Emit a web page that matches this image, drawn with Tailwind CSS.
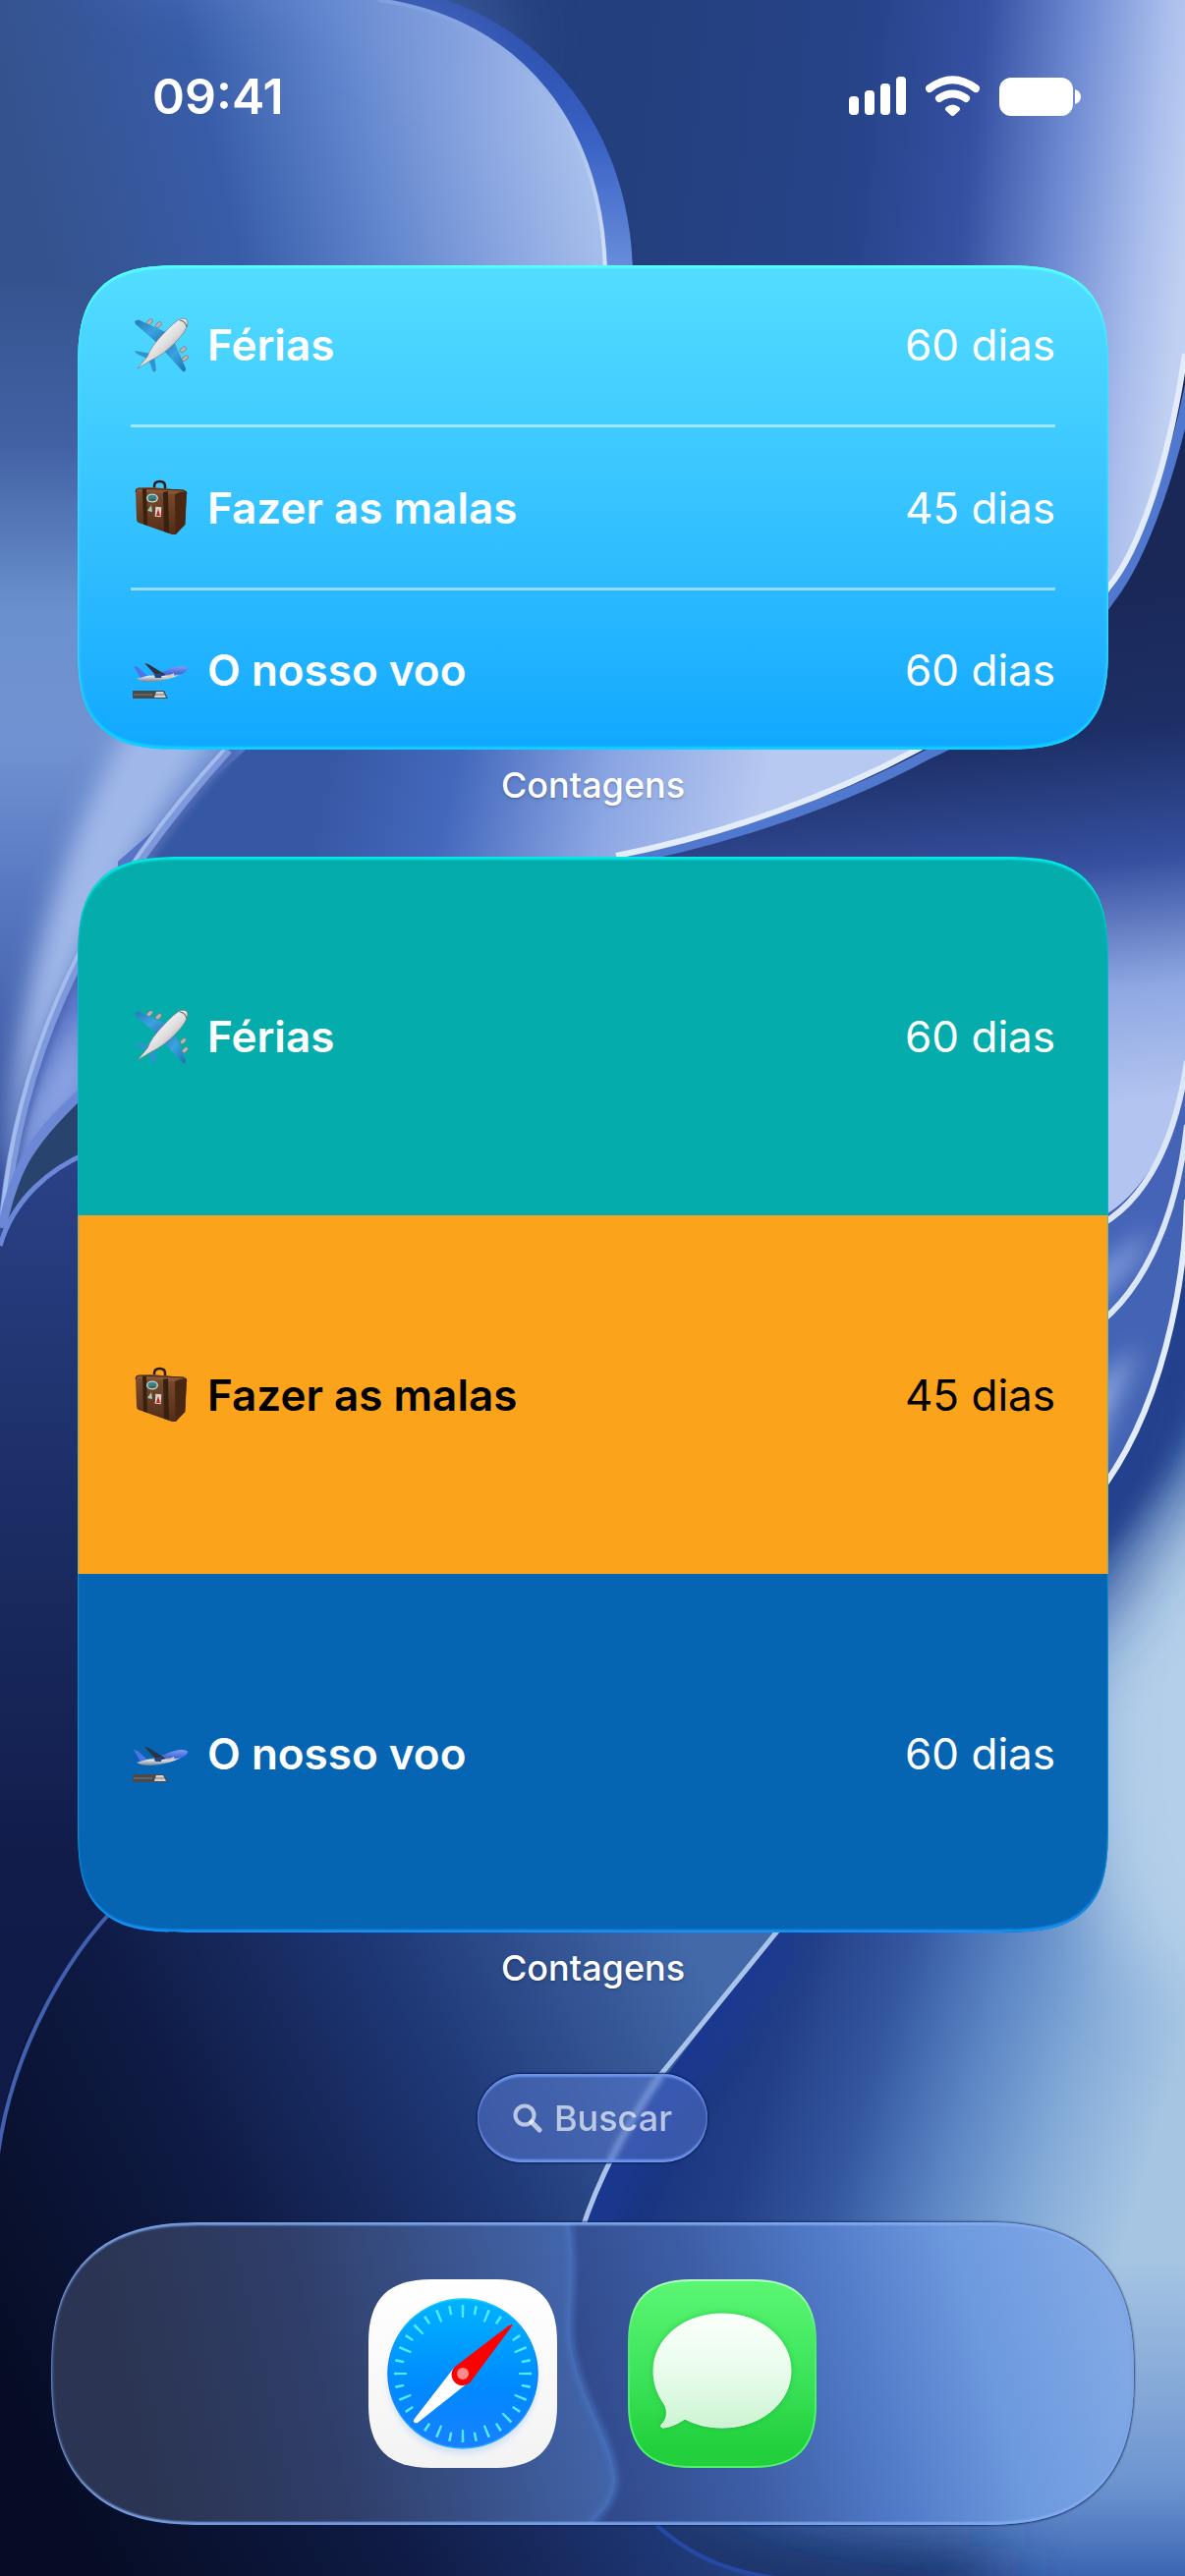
<!DOCTYPE html>
<html lang="pt-BR">
<head>
    <meta charset="UTF-8">
    <meta name="viewport" content="width=device-width, initial-scale=1.0">
    <title>Contagens</title>
    <script src="https://cdn.jsdelivr.net/npm/@tailwindcss/browser@4"></script>
</head>
<body class="relative min-h-screen overflow-x-hidden bg-[#142452] font-[Inter,'Liberation_Sans',sans-serif] text-white">

    <!-- Wallpaper -->
    <svg class="absolute inset-0 -z-10 h-full w-full" viewBox="0 0 1206 2622" preserveAspectRatio="none" aria-hidden="true">
        <defs>
            <filter id="b3" x="-20%" y="-20%" width="140%" height="140%"><feGaussianBlur stdDeviation="3"/></filter>
            <filter id="b12" x="-40%" y="-40%" width="180%" height="180%"><feGaussianBlur stdDeviation="12"/></filter>
            <filter id="b40" x="-60%" y="-60%" width="220%" height="220%"><feGaussianBlur stdDeviation="40"/></filter>
            <linearGradient id="bubble" gradientUnits="userSpaceOnUse" x1="60" y1="330" x2="600" y2="200">
                <stop offset="0" stop-color="#34528d"/><stop offset=".35" stop-color="#385ca8"/><stop offset=".6" stop-color="#5f84cc"/><stop offset=".85" stop-color="#8ea9e2"/><stop offset="1" stop-color="#a6beeb"/>
            </linearGradient>
            <linearGradient id="glint" x1="0" y1="0" x2="0" y2="1">
                <stop offset="0" stop-color="#7f9fdf"/><stop offset="1" stop-color="#dbe8fb"/>
            </linearGradient>
            <linearGradient id="rim" x1="0" y1="0" x2="0" y2="1">
                <stop offset="0" stop-color="#2648a6"/><stop offset=".5" stop-color="#3a62c4"/><stop offset="1" stop-color="#6e93e0"/>
            </linearGradient>
            <linearGradient id="petal" gradientUnits="userSpaceOnUse" x1="640" y1="200" x2="1206" y2="260">
                <stop offset="0" stop-color="#233f7d"/><stop offset=".4" stop-color="#27448a"/><stop offset=".6" stop-color="#3650a2"/><stop offset=".77" stop-color="#6f8bd2"/><stop offset=".92" stop-color="#a9bdec"/><stop offset="1" stop-color="#c0d0f2"/>
            </linearGradient>
            <linearGradient id="tail" gradientUnits="userSpaceOnUse" x1="330" y1="780" x2="760" y2="880">
                <stop offset="0" stop-color="#3657a3"/><stop offset=".3" stop-color="#4468bd"/><stop offset=".65" stop-color="#8ba6e3"/><stop offset="1" stop-color="#b7c8f1"/>
            </linearGradient>
            <linearGradient id="left" gradientUnits="userSpaceOnUse" x1="0" y1="270" x2="0" y2="1200">
                <stop offset="0" stop-color="#34528d"/><stop offset=".2" stop-color="#4262a5"/><stop offset=".38" stop-color="#6a91cd"/><stop offset=".52" stop-color="#7192d2"/><stop offset=".7" stop-color="#5677c0"/><stop offset="1" stop-color="#324c98"/>
            </linearGradient>
            <linearGradient id="navy" gradientUnits="userSpaceOnUse" x1="1100" y1="600" x2="1160" y2="1180">
                <stop offset="0" stop-color="#1a2858"/><stop offset=".25" stop-color="#1d2f66"/><stop offset=".48" stop-color="#3650a0"/><stop offset=".7" stop-color="#8fa8e3"/><stop offset=".9" stop-color="#b2c4ef"/>
            </linearGradient>
            <linearGradient id="side" gradientUnits="userSpaceOnUse" x1="0" y1="1180" x2="0" y2="2200">
                <stop offset="0" stop-color="#2b4187"/><stop offset=".3" stop-color="#1d3069"/><stop offset=".7" stop-color="#111c4a"/><stop offset="1" stop-color="#101a45"/>
            </linearGradient>
            <linearGradient id="bowl" gradientUnits="userSpaceOnUse" x1="0" y1="2420" x2="740" y2="2060">
                <stop offset="0" stop-color="#060c24"/><stop offset=".35" stop-color="#0f1b45"/><stop offset=".65" stop-color="#1e3775"/><stop offset="1" stop-color="#4369a9"/>
            </linearGradient>
            <linearGradient id="wave" gradientUnits="userSpaceOnUse" x1="680" y1="2111" x2="1154" y2="2253">
                <stop offset="0" stop-color="#18347f"/><stop offset=".2" stop-color="#223f86"/><stop offset=".4" stop-color="#34579f"/><stop offset=".6" stop-color="#5b85c4"/><stop offset=".8" stop-color="#84abd8"/><stop offset="1" stop-color="#a6c5e3"/>
            </linearGradient>
            <linearGradient id="wavefade" gradientUnits="userSpaceOnUse" x1="0" y1="2300" x2="0" y2="2622">
                <stop offset="0" stop-color="#5480c8" stop-opacity="0"/><stop offset=".7" stop-color="#5480c8" stop-opacity=".7"/><stop offset="1" stop-color="#3a64b2"/>
            </linearGradient>
            <clipPath id="waveclip"><path d="M1206 1180V2622H780C700 2610 650 2560 610 2490C570 2400 570 2300 606 2235C640 2150 720 2060 789 1967L1110 1530C1185 1440 1206 1300 1206 1221Z"/></clipPath>
        </defs>

        <rect width="1206" height="2622" fill="url(#left)"/>

        <!-- right petal and the dark fold under it -->
        <path d="M400 0H1206V900H560Z" fill="url(#petal)"/>
        <path d="M180 763H960L820 900H80Z" fill="url(#tail)"/>
        <path d="M1206 360C1190 470 1160 560 1128 603C1070 690 990 740 935 763C850 810 740 850 627 872V1400H1206Z" fill="url(#navy)"/>
        <path d="M1217 360C1197 475 1162 568 1131 608C1073 692 997 745 942 769C857 815 740 856 630 876" fill="none" stroke="#5178cf" stroke-width="10"/>
        <path d="M1206 360C1190 470 1160 560 1128 598C1070 686 990 736 935 762C850 808 740 849 627 871" fill="none" stroke="#e3ecfa" stroke-width="6"/>

        <!-- top bubble -->
        <path d="M0 0H454C570 40 646 150 644 290H0Z" fill="url(#rim)"/>
        <path d="M0 0H385C530 20 618 130 617 290H0Z" fill="url(#bubble)"/>
        <path d="M120 -60C300 -50 420 -30 500 60" fill="none" stroke="#6f8fd8" stroke-width="60" opacity=".5" filter="url(#b40)"/>
        <path d="M385 0C530 20 618 130 616 290" fill="none" stroke="url(#glint)" stroke-width="4"/>

        <!-- left petals -->
        <path d="M0 600H160V763H225L130 877L40 1050L0 1180Z" fill="url(#left)"/>
        <path d="M225 740C130 870 50 1010 8 1200C10 1050 50 880 130 740Z" fill="#a0b8e9" filter="url(#b12)"/>
        <path d="M225 763C110 890 20 1040 2 1240L120 1080V877L250 763Z" fill="#5974c6"/>
        <path d="M90 1020C50 1080 25 1130 10 1200L90 1110Z" fill="#8aa3e2" filter="url(#b12)"/>
        <path d="M240 763C148 860 34 1010 7 1230" fill="none" stroke="#5069b4" stroke-width="10" filter="url(#b3)"/>
        <path d="M232 763C126 880 24 1030 4 1240" fill="none" stroke="#7d99dc" stroke-width="10"/>
        <path d="M228 763C121 880 21 1030 2 1240" fill="none" stroke="#a4bcec" stroke-width="4"/>
        <path d="M90 1112C40 1160 16 1190 0 1262V1300L90 1190Z" fill="#29436f"/>
        <path d="M90 1106C40 1150 16 1180 2 1250" fill="none" stroke="#6c87d6" stroke-width="9"/>

        <!-- dark side under the left petals -->
        <path d="M0 1268C14 1220 50 1190 90 1173V1850H300V2200H0Z" fill="url(#side)"/>
        <path d="M0 1268C14 1220 50 1190 90 1173" fill="none" stroke="#6a87d8" stroke-width="5"/>
        <path d="M-30 1320V2100" stroke="#0c1434" stroke-width="60" opacity=".6" filter="url(#b12)"/>

        <!-- right wave -->
        <g>
            <rect x="1100" y="1240" width="106" height="400" fill="#6f8fd4"/>
            <path d="M1100 1248C1160 1230 1195 1160 1210 1085V1150C1190 1260 1160 1320 1100 1360Z" fill="#4564b8"/>
            <path d="M1090 1310L1175 1250L1155 1285L1090 1350Z" fill="#86a2df" filter="url(#b12)"/>
            <path d="M1100 1360C1160 1330 1200 1240 1210 1150V1230C1200 1370 1160 1480 1100 1530Z" fill="#4363b4"/>
            <path d="M1090 1530V1430L1160 1370Z" fill="#8fa9e2" filter="url(#b12)"/>
            <path d="M1100 1256C1160 1235 1195 1170 1208 1080" fill="none" stroke="#dbe6f9" stroke-width="6"/>
            <path d="M1100 1360C1160 1325 1197 1245 1208 1145" fill="none" stroke="#dbe6f9" stroke-width="6"/>
        </g>
        <g clip-path="url(#waveclip)">
            <rect x="560" y="1180" width="646" height="1442" fill="url(#wave)"/>
            <ellipse cx="1226" cy="1770" rx="130" ry="260" fill="#b4cfe9" filter="url(#b40)"/>
            <path d="M1226 1220C1205 1400 1150 1490 1060 1590" fill="none" stroke="#1f3c8a" stroke-width="90" filter="url(#b12)"/>
            <path d="M1216 1300C1190 1450 1150 1560 1060 1650" fill="none" stroke="#27458f" stroke-width="60" filter="url(#b40)"/>
            <path d="M789 1960L673 2111C630 2170 600 2220 590 2280" fill="none" stroke="#1a3a98" stroke-width="80" filter="url(#b12)" opacity=".6"/>
            <rect x="560" y="2300" width="646" height="322" fill="url(#wavefade)"/>
            <path d="M600 2500C680 2610 800 2640 1010 2650" fill="none" stroke="#182d64" stroke-width="110" filter="url(#b40)"/>
        </g>
        <path d="M1208 1221C1206 1300 1185 1440 1110 1530" fill="none" stroke="#e3ecfa" stroke-width="6"/>

        <!-- bottom bowl -->
        <path d="M140 1920C60 1990 0 2100 0 2190V2622H780C700 2610 650 2560 610 2490C570 2400 570 2300 600 2245C640 2150 720 2060 789 1967L820 1920Z" fill="url(#bowl)"/>
        <path d="M140 1920C70 1980 10 2090 -3 2200" fill="none" stroke="#4260b0" stroke-width="4"/>
        <path d="M820 1930L673 2111C640 2160 610 2215 592 2270" fill="none" stroke="#a9c3ea" stroke-width="5"/>
        <path d="M668 2570C700 2600 740 2618 790 2624" fill="none" stroke="#2649a8" stroke-width="4"/>
    </svg>

    <!-- Emoji and icon shapes -->
    <svg class="absolute h-0 w-0" aria-hidden="true">
        <defs>
            <linearGradient id="hull" x1="0" y1="0" x2="1" y2="1">
                <stop offset=".25" stop-color="#fff"/><stop offset=".55" stop-color="#dcdcdc"/><stop offset=".8" stop-color="#8f8f8f"/>
            </linearGradient>
            <linearGradient id="wing" x1="0" y1="0" x2="1" y2="1">
                <stop offset="0" stop-color="#2379b8"/><stop offset=".5" stop-color="#3ba3e0"/><stop offset="1" stop-color="#1d6fae"/>
            </linearGradient>
            <linearGradient id="leather" x1="0" y1="0" x2="0" y2="1">
                <stop offset="0" stop-color="#7d4e31"/><stop offset="1" stop-color="#532c17"/>
            </linearGradient>
            <linearGradient id="jet" x1="0" y1="0" x2="0" y2="1">
                <stop offset="0" stop-color="#7f9df5"/><stop offset=".5" stop-color="#3f66d8"/><stop offset=".65" stop-color="#dfe6ee"/><stop offset="1" stop-color="#76828e"/>
            </linearGradient>
        </defs>
        <symbol id="plane" viewBox="0 0 60 60">
            <g fill="#b9b4b0" stroke="#6f6a68" stroke-width=".6">
                <rect x="16" y="5" width="7" height="4" rx="2" transform="rotate(-42 19 7)"/>
                <rect x="25" y="8" width="7" height="4" rx="2" transform="rotate(-42 28 10)"/>
                <rect x="50" y="33" width="7" height="4" rx="2" transform="rotate(-42 53 35)"/>
                <rect x="52" y="42" width="7" height="4" rx="2" transform="rotate(-42 55 44)"/>
            </g>
            <path d="M4 6L8 4.500L38 18L28 29L5 9Z" fill="url(#wing)"/>
            <path d="M43 24L56 54Q56 58 53 57L32 34Z" fill="url(#wing)"/>
            <path d="M4 36L21 39L17 44L6 39Z" fill="#2f93d2"/>
            <path d="M18 44L24 42L26 56L23 58Z" fill="#2f93d2"/>
            <path d="M7 54L17 42Q21 31 34 18Q45 6 51 3.500Q58 2 58 8Q57 16 45 28Q33 40 22 45Z" fill="url(#hull)" stroke="#7c7c7c" stroke-width=".7"/>
            <path d="M50 5Q56 6 57 12" fill="none" stroke="#6a6a6a" stroke-width="1.200"/>
        </symbol>
        <symbol id="bag" viewBox="0 0 60 60">
            <path d="M24 11V8Q24 3 29.500 3Q35 3 35 8V12" fill="none" stroke="#2d1b12" stroke-width="2.500"/>
            <path d="M5 13Q5 10 8 10L20 9L54 12Q57 13 57 16L55 47L46 57L42 57L8 45Q6 44 6 41Z" fill="url(#leather)"/>
            <path d="M45 15L57 13L55.500 47L45.500 57Z" fill="#4a2713"/>
            <path d="M5 13Q5 10 8 10L20 9L54 12L45 16Z" fill="#875639"/>
            <path d="M12 11H16L17 48L13 46.500ZM33 14L38 13L39 55.500L34 54Z" fill="#38200f"/>
            <path d="M5 14Q5 10 8 10L54 12Q57 13 57 16" fill="none" stroke="#43260f" stroke-width="1"/>
            <ellipse cx="22" cy="20" rx="6" ry="4.500" fill="#c3d3cb"/>
            <ellipse cx="22" cy="20" rx="4.600" ry="3.200" fill="#3f7f93"/>
            <path d="M18.500 22Q22 19 26 21.500Q22 24 18.500 22Z" fill="#3a6a3a"/>
            <path d="M17 33L21 27L22 34Z" fill="#9ecbb8"/>
            <rect x="25" y="29" width="6" height="10" fill="#d8d2c8" transform="rotate(4 28 34)"/>
            <path d="M28 31L30 38H26Z" fill="#c32020"/>
        </symbol>
        <symbol id="takeoff" viewBox="0 0 60 60">
            <path d="M3 26L7 27L17 36L10 38Z" fill="#4e74e8"/>
            <path d="M6 39Q20 35 34 31Q50 24 57 27Q61 30 50 35Q36 41 20 42Q10 42 6 39Z" fill="url(#jet)"/>
            <path d="M14 23L18 24L36 35L27 37Z" fill="#2b3242"/>
            <path d="M24 35Q28 32 32 34L31 38H25Z" fill="#27457e"/>
            <path d="M36 37L44 33V36L38 39Z" fill="#d8cdb9"/>
            <path d="M2 51H34L38 59H2Z" fill="#4a4a4a"/>
            <path d="M26 52H33L36 58H24Z" fill="#d4d4d4"/>
            <path d="M25 55H35" stroke="#777" stroke-width="1"/>
            <path d="M3 55H22" stroke="#7c7c7c" stroke-width="1"/>
        </symbol>
    </svg>

    <div class="flex min-h-screen flex-col">
        <header class="flex h-[196px] items-center justify-between pr-[105px] pl-[155px]">
            <time class="text-[50px] font-semibold">09:41</time>
            <div class="flex items-center gap-5">
                <svg class="h-[40px] w-[58px]" viewBox="0 0 58 40" fill="#fff" role="img" aria-label="Sinal">
                    <rect x="0" y="20" width="10" height="19" rx="4"/>
                    <rect x="16" y="14" width="10" height="25" rx="4"/>
                    <rect x="32" y="7" width="10" height="32" rx="4"/>
                    <rect x="48" y="0" width="10" height="39" rx="4"/>
                </svg>
                <svg class="h-[42px] w-[55px]" viewBox="0 0 55 42" role="img" aria-label="Wi-Fi">
                    <path d="M4 13Q27.500 -4.500 51 13" fill="none" stroke="#fff" stroke-width="8" stroke-linecap="round"/>
                    <path d="M14 23Q27.500 14 41 23" fill="none" stroke="#fff" stroke-width="8" stroke-linecap="round"/>
                    <path d="M21 32Q27.500 27 34 32Q36 34 34 36L29 40.500Q27.500 41.500 26 40.500L21 36Q19 34 21 32Z" fill="#fff"/>
                </svg>
                <svg class="h-[40px] w-[84px]" viewBox="0 0 84 40" fill="#fff" role="img" aria-label="Bateria">
                    <rect x="0" y="1" width="75" height="39" rx="12"/>
                    <path d="M77 13Q83 15 83 20.500Q83 26 77 28Z"/>
                </svg>
            </div>
        </header>

        <main class="mt-[74px] pr-[78px] pl-[79px] text-[44px]">
            <section class="text-center" aria-label="Contagens">
                <ul class="overflow-hidden rounded-[86px] bg-linear-to-b from-[#53ddff] to-[#0fa8ff] px-[54px] text-left shadow-[inset_0_3px_2px_#55ffff,inset_0_-3px_2px_#10d0ff,inset_0_0_4px_#3fe4ff] supports-[corner-shape:squircle]:rounded-[112px] supports-[corner-shape:squircle]:[corner-shape:superellipse(1.6)]">
                    <li class="flex h-[162px] items-center">
                        <svg class="mr-[18px] size-[60px] shrink-0"><use href="#plane"/></svg>
                        <span class="font-semibold">Férias</span>
                        <span class="ml-auto">60 dias</span>
                    </li>
                    <li class="flex h-[166px] items-center border-t-3 border-white/50">
                        <svg class="mr-[18px] size-[60px] shrink-0"><use href="#bag"/></svg>
                        <span class="font-semibold">Fazer as malas</span>
                        <span class="ml-auto">45 dias</span>
                    </li>
                    <li class="flex h-[165px] items-center border-t-3 border-white/50">
                        <svg class="mr-[18px] size-[60px] shrink-0"><use href="#takeoff"/></svg>
                        <span class="font-semibold">O nosso voo</span>
                        <span class="ml-auto">60 dias</span>
                    </li>
                </ul>
                <h2 class="text-[36px] leading-[73px] font-medium text-shadow-md">Contagens</h2>
            </section>

            <section class="mt-9 text-center" aria-label="Contagens">
                <div class="relative overflow-hidden rounded-[86px] supports-[corner-shape:squircle]:rounded-[112px] supports-[corner-shape:squircle]:[corner-shape:superellipse(1.6)]">
                    <ul>
                        <li class="flex h-[365px] items-center bg-[#04adac] px-[54px]">
                            <svg class="mr-[18px] size-[60px] shrink-0"><use href="#plane"/></svg>
                            <span class="font-semibold">Férias</span>
                            <span class="ml-auto">60 dias</span>
                        </li>
                        <li class="flex h-[365px] items-center bg-[#faa31b] px-[54px] text-black">
                            <svg class="mr-[18px] size-[60px] shrink-0"><use href="#bag"/></svg>
                            <span class="font-semibold">Fazer as malas</span>
                            <span class="ml-auto">45 dias</span>
                        </li>
                        <li class="flex h-[365px] items-center bg-[#0665b2] px-[54px]">
                            <svg class="mr-[18px] size-[60px] shrink-0"><use href="#takeoff"/></svg>
                            <span class="font-semibold">O nosso voo</span>
                            <span class="ml-auto">60 dias</span>
                        </li>
                    </ul>
                    <div class="pointer-events-none absolute inset-0 rounded-[86px] shadow-[inset_0_3px_2px_#04e8e6,inset_0_-3px_2px_#1592f5] supports-[corner-shape:squircle]:rounded-[112px] supports-[corner-shape:squircle]:[corner-shape:superellipse(1.6)]"></div>
                </div>
                <h2 class="text-[36px] leading-[73px] font-medium text-shadow-md">Contagens</h2>
            </section>
        </main>

        <button type="button" class="mx-auto mt-[71px] flex h-[90px] items-center gap-3 rounded-full bg-[#6080dc]/45 px-9 text-[36px] font-medium text-white/65 shadow-[inset_0_3px_2px_#6c93ee,inset_0_-3px_2px_#6c93ee,0_0_2px_1px_#0d1d50] backdrop-blur-[3px]">
            <svg class="size-[30px]" viewBox="0 0 30 30" fill="none" stroke="currentColor" stroke-width="4" stroke-linecap="round">
                <circle cx="12" cy="12" r="9.500"/><path d="M19 19L27 27" stroke-width="5"/>
            </svg>
            Buscar
        </button>

        <nav class="relative mx-[52px] mt-[61px] mb-[51px] flex justify-center gap-[72px] overflow-hidden rounded-[132px] py-[58px] shadow-[0_0_2px_1px_#0a1a40aa] supports-[corner-shape:squircle]:rounded-[154px] supports-[corner-shape:squircle]:[corner-shape:superellipse(1.35)]" aria-label="Dock">
            <svg class="absolute inset-0 h-full w-full" viewBox="0 0 1102 309" preserveAspectRatio="none" aria-hidden="true">
                <defs>
                    <linearGradient id="dockl" gradientUnits="userSpaceOnUse" x1="80" y1="200" x2="560" y2="90"><stop offset="0" stop-color="#2b3452"/><stop offset=".4" stop-color="#2f3e69"/><stop offset="1" stop-color="#4468b0"/></linearGradient>
                    <linearGradient id="dockr" gradientUnits="userSpaceOnUse" x1="560" y1="240" x2="1080" y2="90"><stop offset="0" stop-color="#314a8c"/><stop offset=".25" stop-color="#3c5da4"/><stop offset=".5" stop-color="#5079c6"/><stop offset=".75" stop-color="#6d99de"/><stop offset="1" stop-color="#80a9e5"/></linearGradient>
                </defs>
                <rect width="1102" height="309" fill="url(#dockr)"/>
                <path d="M0 0H527C534 50 528 70 528 110C530 170 572 220 574 262C574 285 560 295 548 309H0Z" fill="url(#dockl)"/>
                <path d="M527 0C534 50 528 70 528 110C530 170 572 220 574 262C574 285 560 295 548 309" fill="none" stroke="#4a74c2" stroke-width="5" filter="url(#b3)"/>
            </svg>
            <div class="pointer-events-none absolute inset-0 rounded-[132px] shadow-[inset_0_3px_2px_#84b0f8cc,inset_0_-3px_2px_#84b0f8cc,inset_0_0_4px_#7898d8] supports-[corner-shape:squircle]:rounded-[154px] supports-[corner-shape:squircle]:[corner-shape:superellipse(1.35)]"></div>

            <a href="#safari" class="relative size-[192px]" aria-label="Safari">
                <svg viewBox="0 0 192 192">
                    <defs>
                        <linearGradient id="paper" x1="0" y1="0" x2="0" y2="1"><stop offset="0" stop-color="#fff"/><stop offset="1" stop-color="#f3f3f4"/></linearGradient>
                        <linearGradient id="dial" x1="0" y1="0" x2="0" y2="1"><stop offset="0" stop-color="#00b4ff"/><stop offset=".6" stop-color="#0089ff"/><stop offset="1" stop-color="#1a80ff"/></linearGradient>
                        <linearGradient id="rimblue" x1="0" y1="0" x2="0" y2="1"><stop offset="0" stop-color="#12ceff"/><stop offset=".5" stop-color="#0a74ff"/><stop offset="1" stop-color="#22b4ff"/></linearGradient>
                    </defs>
                    <path d="M64 0H128C172 0 192 20 192 64V128C192 172 172 192 128 192H64C20 192 0 172 0 128V64C0 20 20 0 64 0Z" fill="url(#paper)"/>
                    <circle cx="96" cy="102" r="76" fill="#bcd4f4" opacity=".6" filter="url(#b3)"/>
                    <circle cx="96" cy="96" r="76" fill="url(#dial)" stroke="url(#rimblue)" stroke-width="1.500"/>
                    <!-- long and short marks, 32 in all -->
                    <g fill="none" stroke="#52eaff">
                        <circle cx="96" cy="96" r="63.500" stroke-width="13" pathLength="3200" stroke-dasharray="20 180" stroke-dashoffset="10"/>
                        <circle cx="96" cy="96" r="65.500" stroke-width="9" pathLength="3200" stroke-dasharray="20 180" stroke-dashoffset="-90"/>
                    </g>
                    <path d="M87 90L46 143Q46 147 50 146L103 104Z" fill="#fff"/>
                    <path d="M146.500 47Q146 45 143 47L88 89A11 11 0 1 0 103.500 105Z" fill="#f00"/>
                    <circle cx="96" cy="96" r="6" fill="#ff8a8a"/>
                </svg>
            </a>
            <a href="#mensagens" class="relative size-[192px]" aria-label="Mensagens">
                <svg viewBox="0 0 192 192">
                    <defs>
                        <linearGradient id="green" x1="0" y1="0" x2="0" y2="1"><stop offset="0" stop-color="#5bf673"/><stop offset=".5" stop-color="#3de45b"/><stop offset=".9" stop-color="#21d03c"/></linearGradient>
                        <linearGradient id="talk" x1="0" y1="0" x2="0" y2="1"><stop offset="0" stop-color="#fafffa"/><stop offset=".5" stop-color="#e9fcec"/><stop offset="1" stop-color="#cdf4d3"/></linearGradient>
                        <linearGradient id="greenrim" x1="0" y1="0" x2="0" y2="1"><stop offset="0" stop-color="#b5ffc0"/><stop offset=".3" stop-color="#4bee66"/><stop offset="1" stop-color="#4ef569"/></linearGradient>
                    </defs>
                    <path d="M64 1H128C171 1 191 21 191 64V128C191 171 171 191 128 191H64C21 191 1 171 1 128V64C1 21 21 1 64 1Z" fill="url(#green)" stroke="url(#greenrim)" stroke-width="2"/>
                    <path d="M96 35C135 35 166 60 166 93C166 126 135 151 96 151C82 151 69 148 58 142C51 147 42 151 35 151Q32 150 35 147C40 142 41 134 37 127C30 117 26 106 26 93C26 60 57 35 96 35Z" fill="#0fa02c" opacity=".5" filter="url(#b3)"/>
                    <path d="M96 35C135 35 166 60 166 93C166 126 135 151 96 151C82 151 69 148 58 142C51 147 42 151 35 151Q32 150 35 147C40 142 41 134 37 127C30 117 26 106 26 93C26 60 57 35 96 35Z" fill="url(#talk)" stroke="#f4fff5" stroke-width="1"/>
                </svg>
            </a>
        </nav>
    </div>
</body>
</html>
